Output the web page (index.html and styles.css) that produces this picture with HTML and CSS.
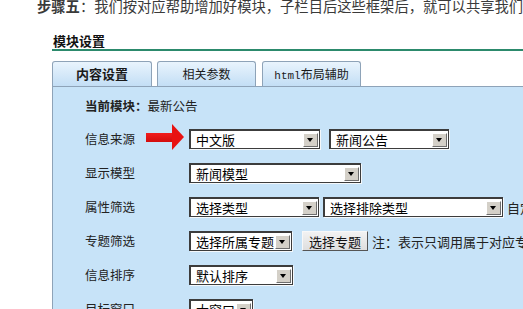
FILE: index.html
```html
<!DOCTYPE html>
<html lang="zh-CN">
<head>
<meta charset="utf-8">
<title>模块设置</title>
<link rel="stylesheet" href="styles.css">
</head>
<body>
<p class="intro"><b>步骤五</b>：我们按对应帮助增加好模块，子栏目后这些框架后，就可以共享我们设置的模块了</p>
<div class="module">
  <h3 class="title">模块设置</h3>
  <div class="tabs">
    <div class="tab active">内容设置</div>
    <div class="tab tab2">相关参数</div>
    <div class="tab tab3"><span class="mono">html</span>布局辅助</div>
  </div>
  <div class="panel">
    <div class="current"><b>当前模块：</b>最新公告</div>
    <div class="form">
      <div class="label">信息来源</div>
      <div class="field">
        <span class="pointer"><span class="shaft"></span><span class="head"></span></span>
        <span class="sel w131"><span class="val">中文版</span><span class="btn"></span></span>
        <span class="sel w120 gap10"><span class="val">新闻公告</span><span class="btn"></span></span>
      </div>

      <div class="label">显示模型</div>
      <div class="field">
        <span class="sel w172"><span class="val">新闻模型</span><span class="btn"></span></span>
      </div>

      <div class="label">属性筛选</div>
      <div class="field">
        <span class="sel w130"><span class="val">选择类型</span><span class="btn"></span></span>
        <span class="sel w180 gap4"><span class="val">选择排除类型</span><span class="btn"></span></span>
        <span class="note gap12">自定义属性</span>
      </div>

      <div class="label">专题筛选</div>
      <div class="field">
        <span class="sel w103"><span class="val">选择所属专题</span><span class="btn"></span></span>
        <button class="button" type="button">选择专题</button>
        <span class="note">注：表示只调用属于对应专题的信息</span>
      </div>

      <div class="label">信息排序</div>
      <div class="field">
        <span class="sel w104"><span class="val">默认排序</span><span class="btn"></span></span>
      </div>

      <div class="label">目标窗口</div>
      <div class="field">
        <span class="sel w64"><span class="val">大窗口</span><span class="btn"></span></span>
      </div>
    </div>
  </div>
</div>
</body>
</html>
```
FILE: styles.css
```css
html, body {
  margin: 0;
  padding: 0;
  background: #fff;
  overflow: hidden;
}
body {
  font-family: "Noto Sans CJK SC", "Noto Sans", sans-serif;
  color: #222;
  width: 523px;
}
.intro {
  margin: -2px 0 0 37px;
  font-size: 14.3px;
  line-height: 16px;
  color: #3a3a3a;
  white-space: nowrap;
}
.module {
  margin: 19px 0 0 52px;
  width: 560px;
}
.title {
  margin: 0;
  padding-left: 1px;
  font-size: 13px;
  line-height: 16px;
  font-weight: bold;
  color: #111;
  border-bottom: 2px solid #2c8a6c;
}
.tabs {
  display: flex;
  gap: 5px;
  margin-top: 10px;
}
.tab {
  box-sizing: border-box;
  width: 100px;
  height: 25px;
  border: 1px solid #8ea3b8;
  border-bottom: none;
  border-radius: 3px 3px 0 0;
  background: linear-gradient(#e9f4fd, #c3def5);
  font-size: 12px;
  line-height: 24px;
  text-align: center;
  color: #1a1a1a;
}
.tab.active {
  font-weight: bold;
  font-size: 13px;
}
.tab2 { width: 99px; }
.tab3 { margin-left: 1px; width: 99px; }
.mono {
  font-family: "Liberation Mono", "DejaVu Sans Mono", monospace;
  font-size: 11px;
}
.panel {
  border-top: 1px solid #8ea3b8;
  border-left: 1px solid #8ea3b8;
  background: #c7e3f8;
  padding: 9px 0 30px 32px;
  height: 300px;
}
.current {
  font-size: 12.5px;
  line-height: 20px;
}
.form {
  display: grid;
  grid-template-columns: 104px auto;
  row-gap: 14px;
  margin-top: 13px;
  align-items: center;
}
.label {
  font-size: 12.5px;
  line-height: 20px;
  color: #222;
}
.field {
  position: relative;
  display: flex;
  align-items: center;
  height: 20px;
  white-space: nowrap;
}
.sel {
  box-sizing: border-box;
  display: inline-flex;
  align-items: center;
  height: 20px;
  background: #fff;
  border: 1px solid #3c3c3c;
  border-top-width: 2px;
  border-left-width: 2px;
  box-shadow: 1px 1px 0 #f4f8fb;
  font-size: 13px;
  color: #000;
}
.sel .val {
  flex: 1;
  padding-left: 5px;
  line-height: 16px;
  overflow: hidden;
}
.sel .btn {
  position: relative;
  box-sizing: border-box;
  width: 15px;
  height: 14px;
  margin-right: 1px;
  background: #d4d0c8;
  border: 1px solid;
  border-color: #fff #6e6e6e #6e6e6e #fff;
}
.sel .btn::after {
  content: "";
  position: absolute;
  left: 3px;
  top: 4px;
  border-left: 3.5px solid transparent;
  border-right: 3.5px solid transparent;
  border-top: 4px solid #000;
}
.w131 { width: 131px; }
.w120 { width: 120px; }
.w172 { width: 172px; }
.w130 { width: 130px; }
.w180 { width: 180px; }
.w103 { width: 103px; }
.w104 { width: 104px; }
.w64 { width: 64px; }
.gap10 { margin-left: 9px; }
.gap4 { margin-left: 4px; }
.gap12 { margin-left: 14px; }
.button {
  box-sizing: border-box;
  margin: 0 0 0 10px;
  height: 20px;
  width: 66px;
  padding: 0;
  font-family: inherit;
  font-size: 13px;
  color: #111;
  background: linear-gradient(#f2f2f2, #dedede);
  border: 1px solid;
  border-color: #f8f8f8 #555 #555 #f8f8f8;
}
.note {
  margin-left: 4px;
  font-size: 13px;
  color: #222;
}
.pointer {
  position: absolute;
  left: -43px;
  top: -5px;
  width: 38px;
  height: 26px;
  display: flex;
  align-items: center;
}
.pointer .shaft {
  width: 26px;
  height: 9px;
  background: linear-gradient(#f21c1c, #d20d0d);
}
.pointer .head {
  width: 0;
  height: 0;
  border-top: 13px solid transparent;
  border-bottom: 13px solid transparent;
  border-left: 12px solid #e81212;
}
```
